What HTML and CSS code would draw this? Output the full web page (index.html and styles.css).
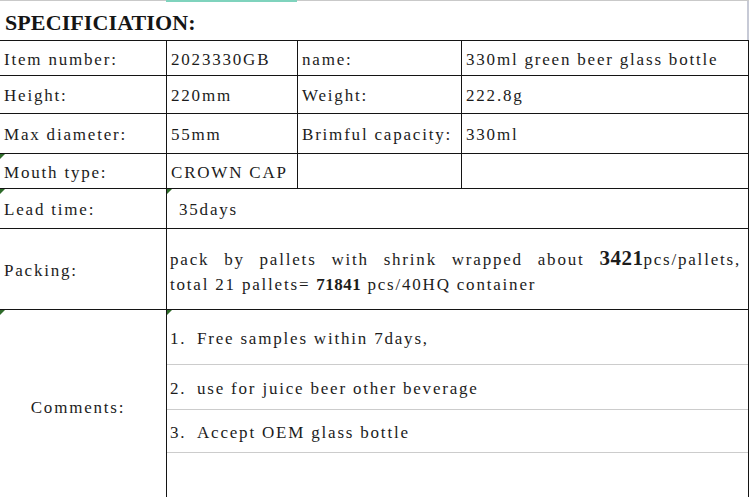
FILE: index.html
```html
<!DOCTYPE html>
<html>
<head>
<meta charset="utf-8">
<link rel="stylesheet" href="styles.css">
</head>
<body>
<div class="page">
  <div class="topbar"><span class="tab"></span></div>
  <div class="header">
    <h1 class="title">SPECIFICIATION:</h1>
  </div>
  <div class="sheet">
    <div class="cell r1">Item number:</div>
    <div class="cell r1">2023330GB</div>
    <div class="cell r1">name:</div>
    <div class="cell r1">330ml green beer glass bottle</div>

    <div class="cell r2">Height:</div>
    <div class="cell r2">220mm</div>
    <div class="cell r2">Weight:</div>
    <div class="cell r2">222.8g</div>

    <div class="cell r3">Max diameter:</div>
    <div class="cell r3">55mm</div>
    <div class="cell r3">Brimful capacity:</div>
    <div class="cell r3">330ml</div>

    <div class="cell r4 mark">Mouth type:</div>
    <div class="cell r4">CROWN CAP</div>
    <div class="cell r4"></div>
    <div class="cell r4"></div>

    <div class="cell r5 mark">Lead time:</div>
    <div class="cell r5 span3 mark lead">35days</div>

    <div class="cell r6">Packing:</div>
    <div class="cell r6 span3 packing">
      <div class="pack-text">
        <span class="pack-line first">pack by pallets with shrink wrapped about <b class="big">3421</b>pcs/pallets,</span>
        <span class="pack-line">total 21 pallets= <b class="mid">71841</b> pcs/40HQ container</span>
      </div>
    </div>

    <div class="cell r7 mark comments-label">Comments:</div>
    <div class="cell r7 span3 mark comments">
      <div class="item i1"><span class="num">1.</span>Free samples within 7days,</div>
      <div class="item i2"><span class="num">2.</span>use for juice beer other beverage</div>
      <div class="item i3"><span class="num">3.</span>Accept OEM glass bottle</div>
    </div>
  </div>
</div>
</body>
</html>
```

FILE: styles.css
```css
html, body {
  margin: 0;
  padding: 0;
  background: #ffffff;
  overflow: hidden;
}
.page {
  width: 749px;
  height: 497px;
  position: relative;
  overflow: hidden;
  font-family: "Liberation Serif", "Noto Sans CJK SC", serif;
  color: #1c1c1c;
}
.topbar {
  height: 1px;
  background: #c9c9c9;
  position: relative;
}
.tab {
  position: absolute;
  left: 166px;
  top: 0;
  width: 131px;
  height: 2px;
  background: #7fd3bd;
}
.header {
  height: 39px;
  border-right: 2px solid #c7cad6;
  box-sizing: border-box;
  width: 749px;
}
.title {
  margin: 0;
  padding: 9px 0 0 5px;
  font-size: 22px;
  line-height: 26px;
  letter-spacing: 0.1px;
  font-weight: bold;
  color: #151515;
}
.sheet {
  display: grid;
  grid-template-columns: 166px 130px 163px 286px;
  grid-template-rows: 34px 37px 39px 34px 39px 80px 200px;
  column-gap: 1px;
  row-gap: 1px;
  background: #141414;
  padding: 1px 1px 0 0;
  width: 749px;
  box-sizing: border-box;
}
.cell {
  background: #ffffff;
  position: relative;
  display: flex;
  align-items: center;
  padding: 3px 3px 0 4px;
  font-size: 17px;
  letter-spacing: 1.8px;
  white-space: nowrap;
  box-sizing: border-box;
  overflow: hidden;
}
.span3 {
  grid-column: span 3;
}
.mark::before {
  content: "";
  position: absolute;
  left: 0;
  top: 0;
  width: 0;
  height: 0;
  border-top: 5px solid #2e6b2a;
  border-right: 5px solid transparent;
}
.lead {
  padding-left: 12px;
}
.packing {
  padding: 4px 7px 0 3px;
}
.pack-text {
  width: 100%;
  line-height: 25px;
}
.pack-line {
  display: block;
  white-space: nowrap;
}
.pack-line.first {
  white-space: normal;
  text-align: justify;
  text-align-last: justify;
}
.big {
  font-size: 21px;
  letter-spacing: 0.5px;
}
.mid {
  font-size: 17px;
  letter-spacing: 0.5px;
}
.comments-label {
  justify-content: center;
  padding: 0 10px 5px 0;
}
.comments {
  flex-direction: column;
  align-items: stretch;
  justify-content: flex-start;
  padding: 0;
}
.item {
  display: flex;
  align-items: center;
  padding: 4px 3px 0 3px;
  border-bottom: 1px solid #cccccc;
  box-sizing: border-box;
}
.num {
  width: 27px;
  flex: none;
}
.i1 { height: 55px; }
.i2 { height: 45px; }
.i3 { height: 43px; }
```
